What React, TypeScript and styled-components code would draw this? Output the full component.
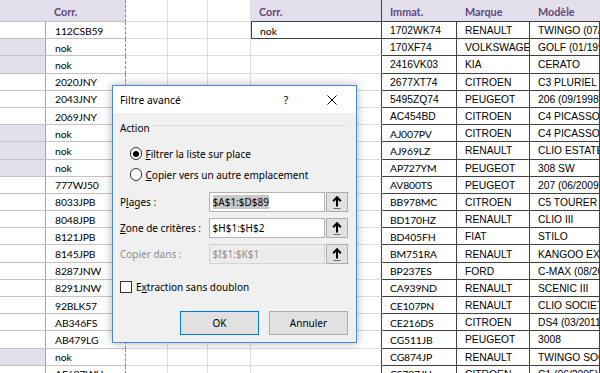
import React from 'react';
import styled, { createGlobalStyle, css } from 'styled-components';

const GlobalStyle = createGlobalStyle`
  html, body { margin: 0; padding: 0; background: #ffffff; }
  body { width: 600px; height: 373px; overflow: hidden; }
  #root { width: 600px; height: 373px; }
`;

const COLS = '46px 80px 42px 40px 43px 131px 75px 73px 70px';
const CAL = `Lato, 'Open Sans', sans-serif`;
const ARIAL = `'Liberation Sans', Arial, sans-serif`;
const UI = `'Noto Sans', 'Open Sans', sans-serif`;

const TINT = '#e4dfec';
const GRID = '#dcdcdc';
const LIGHT = '#c3c3c3';
const DARK = '#404040';
const ANTS = '1px dashed #5f9f7a';

const Screen = styled.div`
  position: relative;
  width: 600px;
  height: 373px;
  overflow: hidden;
  background: #fff;
`;

const Sheet = styled.div`
  display: flex;
  flex-direction: column;
  width: 600px;
`;

const Row = styled.div<{ $head?: boolean }>`
  display: grid;
  grid-template-columns: ${COLS};
  height: ${p => (p.$head ? '22px' : '17.2px')};
  flex: none;
`;

const cellBase = css`
  box-sizing: border-box;
  min-width: 0;
  overflow: hidden;
  white-space: nowrap;
  display: flex;
  align-items: center;
`;

const HeadCell = styled.div<{ $tint?: boolean; $under: string; $edge?: string }>`
  ${cellBase};
  padding: 1px 0 0 8px;
  background: ${p => (p.$tint ? TINT : '#ffffff')};
  border-bottom: 1px solid ${p => p.$under};
  border-right: ${p => p.$edge ?? 'none'};
  font-family: ${CAL};
  font-weight: 700;
  font-size: 10.8px;
  color: #60497a;
`;

const KeyCell = styled.div<{ $tint?: boolean }>`
  ${cellBase};
  background: ${p => (p.$tint ? TINT : '#ffffff')};
  border-bottom: 1px solid ${LIGHT};
  border-right: 1px solid #a6a6a6;
`;

const CorrCell = styled.div`
  ${cellBase};
  padding: 1px 0 0 9px;
  border-bottom: 1px solid ${LIGHT};
  border-right: ${ANTS};
  font-family: ${CAL};
  font-size: 10.4px;
  letter-spacing: -0.15px;
  color: #000;
`;

const BlankCell = styled.div`
  ${cellBase};
  border-bottom: 1px solid ${GRID};
  border-right: 1px solid ${GRID};
`;

const CritCell = styled.div<{ $boxed?: boolean }>`
  ${cellBase};
  padding: 1px 0 0 8px;
  border-bottom: 1px solid ${p => (p.$boxed ? DARK : GRID)};
  border-right: 1px solid ${DARK};
  border-left: ${p => (p.$boxed ? `1px solid ${DARK}` : 'none')};
  font-family: ${CAL};
  font-size: 10.4px;
  color: #000;
`;

const TableCell = styled.div<{ $font: 'cal' | 'arial' }>`
  ${cellBase};
  padding: 1px 0 0 8px;
  border-bottom: 1px solid ${DARK};
  border-right: 1px solid ${DARK};
  font-family: ${p => (p.$font === 'cal' ? CAL : ARIAL)};
  font-size: ${p => (p.$font === 'cal' ? '10.4px' : '10.3px')};
  letter-spacing: ${p => (p.$font === 'cal' ? '-0.15px' : '0')};
  color: #000;
`;

/* ---------- dialog ---------- */

const Dialog = styled.div`
  position: absolute;
  left: 112px;
  top: 85px;
  width: 245px;
  height: 258px;
  box-sizing: border-box;
  border: 1px solid #4a8ad4;
  background: #f0f0f0;
  box-shadow: 0 0 9px rgba(0, 0, 0, 0.3);
  display: flex;
  flex-direction: column;
  font-family: ${UI};
  font-size: 10px;
  color: #000;
`;

const TitleBar = styled.div`
  flex: none;
  height: 27px;
  background: #fff;
  display: flex;
  align-items: center;
  padding: 0 4px 0 7px;
`;

const Title = styled.div`
  flex: 1;
  font-size: 10.3px;
`;

const TitleButton = styled.div<{ $gap?: number }>`
  width: 40px;
  height: 27px;
  display: flex;
  align-items: center;
  justify-content: center;
  margin-left: ${p => p.$gap ?? 0}px;
  font-size: 10.5px;
`;

const Body = styled.div`
  flex: 1;
  display: flex;
  flex-direction: column;
  padding: 7px 8px 0 7px;
`;

const Legend = styled.div`
  height: 16px;
  display: flex;
  align-items: center;
  gap: 3px;
`;

const LegendRule = styled.div`
  flex: 1;
  height: 1px;
  background: #dcdcdc;
  margin: 0 1px 5px 0;
`;

const Options = styled.div`
  margin-top: 7px;
  display: flex;
  flex-direction: column;
`;

const OptionRow = styled.div`
  height: 21px;
  display: flex;
  align-items: center;
  gap: 3.5px;
  padding-left: 9.5px;
`;

const RadioMark = styled.span<{ $on?: boolean }>`
  box-sizing: border-box;
  width: 12.5px;
  height: 12.5px;
  border-radius: 50%;
  border: 1px solid #333;
  background: #fff;
  display: flex;
  align-items: center;
  justify-content: center;
  &::after {
    content: '';
    width: 6px;
    height: 6px;
    border-radius: 50%;
    background: #000;
    display: ${p => (p.$on ? 'block' : 'none')};
  }
`;

const Fields = styled.div`
  margin-top: 7px;
  display: flex;
  flex-direction: column;
  gap: 6px;
`;

const FieldRow = styled.div`
  height: 20px;
  display: flex;
  align-items: stretch;
`;

const FieldLabel = styled.div<{ $off?: boolean }>`
  width: 89px;
  display: flex;
  align-items: center;
  color: ${p => (p.$off ? '#8d8d8d' : '#000')};
`;

const FieldBox = styled.div<{ $off?: boolean }>`
  width: 117px;
  box-sizing: border-box;
  border: 1px solid ${p => (p.$off ? '#d4d4d4' : '#b4b4b4')};
  background: ${p => (p.$off ? '#ececec' : '#ffffff')};
  display: flex;
  align-items: center;
  padding-left: 3px;
  color: ${p => (p.$off ? '#8d8d8d' : '#000')};
`;

const Selected = styled.span`
  background: #c8c8c8;
`;

const PickButton = styled.div`
  width: 22px;
  margin-left: 1px;
  box-sizing: border-box;
  background: #e1e1e1;
  border: 1px solid #adadad;
  display: flex;
  align-items: center;
  justify-content: center;
`;

const CheckRow = styled.div`
  margin-top: 15px;
  height: 16px;
  display: flex;
  align-items: center;
  gap: 4px;
`;

const CheckMark = styled.span`
  width: 12px;
  height: 12px;
  box-sizing: border-box;
  border: 1px solid #333;
  background: #fff;
`;

const Actions = styled.div`
  margin-top: 16px;
  display: flex;
  justify-content: flex-end;
  gap: 10px;
`;

const DlgButton = styled.div<{ $default?: boolean }>`
  width: 79px;
  height: 23.5px;
  box-sizing: border-box;
  background: #e1e1e1;
  border: 1px solid ${p => (p.$default ? '#0078d7' : '#adadad')};
  display: flex;
  align-items: center;
  justify-content: center;
`;

const PickIcon = () => (
  <svg width="12" height="15" viewBox="0 0 12 15">
    <path d="M6 2.5V11.5" stroke="#000" strokeWidth="2" />
    <path d="M2.2 6.3L6 2.3L9.8 6.3" stroke="#000" strokeWidth="2" fill="none" />
    <rect x="2.5" y="13" width="7" height="1" fill="#6a6a6a" />
  </svg>
);

const CloseIcon = () => (
  <svg width="10" height="10" viewBox="0 0 10 10">
    <path d="M0.5 0.5L9.5 9.5M9.5 0.5L0.5 9.5" stroke="#000" strokeWidth="1" />
  </svg>
);

/* ---------- data ---------- */

const corr = [
  '112CSB59', 'nok', 'nok', '2020JNY', '2043JNY', '2069JNY', 'nok', 'nok', 'nok',
  '777WJ50', '8033JPB', '8048JPB', '8121JPB', '8145JPB', '8287JNW', '8291JNW',
  '92BLK57', 'AB346FS', 'AB479LG', 'nok', 'AF627WU',
];

const cars: [string, string, string][] = [
  ['1702WK74', 'RENAULT', 'TWINGO (07/2007)'],
  ['170XF74', 'VOLKSWAGEN', 'GOLF (01/1998)'],
  ['2416VK03', 'KIA', 'CERATO'],
  ['2677XT74', 'CITROEN', 'C3 PLURIEL'],
  ['5495ZQ74', 'PEUGEOT', '206 (09/1998)'],
  ['AC454BD', 'CITROEN', 'C4 PICASSO'],
  ['AJ007PV', 'CITROEN', 'C4 PICASSO'],
  ['AJ969LZ', 'RENAULT', 'CLIO ESTATE'],
  ['AP727YM', 'PEUGEOT', '308 SW'],
  ['AV800TS', 'PEUGEOT', '207 (06/2009)'],
  ['BB978MC', 'CITROEN', 'C5 TOURER'],
  ['BD170HZ', 'RENAULT', 'CLIO III'],
  ['BD405FH', 'FIAT', 'STILO'],
  ['BM751RA', 'RENAULT', 'KANGOO EXPRESS'],
  ['BP237ES', 'FORD', 'C-MAX (08/2007)'],
  ['CA939ND', 'RENAULT', 'SCENIC III'],
  ['CE107PN', 'RENAULT', 'CLIO SOCIETE'],
  ['CE216DS', 'CITROEN', 'DS4 (03/2011)'],
  ['CG511JB', 'PEUGEOT', '3008'],
  ['CG874JP', 'RENAULT', 'TWINGO SOCIETE'],
  ['CS727JU', 'CITROEN', 'C1 (06/2005)'],
];

export default function App() {
  return (
    <Screen>
      <GlobalStyle />
      <Sheet>
        <Row $head>
          <HeadCell $tint $under={LIGHT} />
          <HeadCell $tint $under={LIGHT} $edge={ANTS}>Corr.</HeadCell>
          <HeadCell $under={GRID} $edge={`1px solid ${GRID}`} />
          <HeadCell $under={GRID} $edge={`1px solid ${GRID}`} />
          <HeadCell $under={GRID} $edge={`1px solid ${GRID}`} />
          <HeadCell $tint $under={DARK} $edge={`1px solid ${DARK}`}>Corr.</HeadCell>
          <HeadCell $tint $under={DARK}>Immat.</HeadCell>
          <HeadCell $tint $under={DARK}>Marque</HeadCell>
          <HeadCell $tint $under={DARK}>Modèle</HeadCell>
        </Row>
        {corr.map((c, i) => {
          const [immat, marque, modele] = cars[i];
          return (
            <Row key={i}>
              <KeyCell $tint={c === 'nok'} />
              <CorrCell>{c}</CorrCell>
              <BlankCell />
              <BlankCell />
              <BlankCell />
              <CritCell $boxed={i === 0}>{i === 0 ? 'nok' : ''}</CritCell>
              <TableCell $font={i < 6 ? 'arial' : 'cal'}>{immat}</TableCell>
              <TableCell $font="arial">{marque}</TableCell>
              <TableCell $font="arial">{modele}</TableCell>
            </Row>
          );
        })}
      </Sheet>

      <Dialog>
        <TitleBar>
          <Title>Filtre avancé</Title>
          <TitleButton>?</TitleButton>
          <TitleButton $gap={6}>
            <CloseIcon />
          </TitleButton>
        </TitleBar>
        <Body>
          <Legend>
            <span>Action</span>
            <LegendRule />
          </Legend>
          <Options>
            <OptionRow>
              <RadioMark $on />
              <span>
                <u>F</u>iltrer la liste sur place
              </span>
            </OptionRow>
            <OptionRow>
              <RadioMark />
              <span>
                <u>C</u>opier vers un autre emplacement
              </span>
            </OptionRow>
          </Options>
          <Fields>
            <FieldRow>
              <FieldLabel>
                <span>
                  P<u>l</u>ages :
                </span>
              </FieldLabel>
              <FieldBox>
                <Selected>$A$1:$D$89</Selected>
              </FieldBox>
              <PickButton>
                <PickIcon />
              </PickButton>
            </FieldRow>
            <FieldRow>
              <FieldLabel>
                <span>
                  <u>Z</u>one de critères :
                </span>
              </FieldLabel>
              <FieldBox>$H$1:$H$2</FieldBox>
              <PickButton>
                <PickIcon />
              </PickButton>
            </FieldRow>
            <FieldRow>
              <FieldLabel $off>Copier dans :</FieldLabel>
              <FieldBox $off>$I$1:$K$1</FieldBox>
              <PickButton>
                <PickIcon />
              </PickButton>
            </FieldRow>
          </Fields>
          <CheckRow>
            <CheckMark />
            <span>
              E<u>x</u>traction sans doublon
            </span>
          </CheckRow>
          <Actions>
            <DlgButton $default>OK</DlgButton>
            <DlgButton>Annuler</DlgButton>
          </Actions>
        </Body>
      </Dialog>
    </Screen>
  );
}
